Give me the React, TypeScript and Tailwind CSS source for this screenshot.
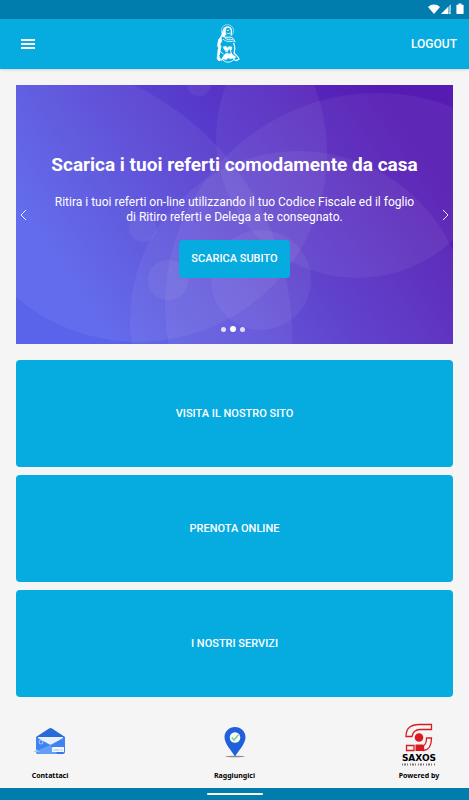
const links = ["VISITA IL NOSTRO SITO", "PRENOTA ONLINE", "I NOSTRI SERVIZI"];

function StatusBar() {
  return (
    <div className="flex h-[19px] items-center justify-end bg-[#007dad] pr-1">
      <svg width="38" height="14" viewBox="0 0 38 14" fill="#fff" aria-hidden="true">
        <path d="M1 4C4.500 .700 9.500 .700 13 4L7 11Z" />
        <path d="M23.500 1.500V11H14Z" fillOpacity=".45" />
        <path d="M21 4V11H14ZM22.300 9.300h1.200v1.700h-1.200zM22.800 2.200l.7-.7v7h-.7z" />
        <path d="M30 1.700h1.500V.5h3v1.200H36q.6 0 .6.600v8q0 .7-.6.700h-6q-.6 0-.6-.7v-8q0-.6.6-.6z" />
      </svg>
    </div>
  );
}

function Logo() {
  return (
    <svg width="24" height="40" viewBox="0 0 24 40" fill="none" stroke="#fff" aria-hidden="true">
      <circle cx="11.500" cy="6.800" r="6.200" strokeWidth=".7" strokeOpacity=".75" />
      <path d="M15 11c1-3 1-8-3.500-8S7 7 6.500 10L4.500 14c-2 2-2.500 5-2 8" strokeWidth="1.400" />
      <path d="M10.500 3.500C7.500 5 8 9 6 12.500l2 .5 2-2.500c-1-2-.5-4.500.5-7z" fill="#fff" strokeWidth=".5" />
      <path d="M11 6.500l2-.5m-2.500 3c1 1 2 1 3.500 0M8 13c2 1 5 1 8 .5 2 1 2.500 3 3 5M7 15c3 3 7 3 11 2M9 14c2 2 5 2 8 1.500" strokeWidth="1" strokeOpacity=".85" />
      <path d="M3 15l2-2 1 4-2 3 1 3-2 2-1.500-3zM2 25l2-2v5l-1 4 2 4-2 1-2-2z" fill="#fff" strokeWidth=".5" />
      <path d="M17.500 19c1.500 3 1.500 7 .5 10l4 4 1 2-2.500 1.500-3-1" strokeWidth="1.200" />
      <path d="M7 23l3-1 1 2 2-1.500 3 .5-.5 3-2-1-2 2-3-1zM9 30l2-1 2 1 2-1 2 2 3 2-2 2-2-1-1 1-3-1-2 2-2-1-3 1 2-3z" fill="#fff" strokeWidth=".4" />
      <path d="M3.500 27l4 3M5 22l-2 9M7 36c3 3 7 3 11-.5M5.500 37l3-6M14 25l2 6M9 27l3 1" strokeWidth=".9" />
    </svg>
  );
}

function Header() {
  return (
    <header className="flex h-[50px] items-center justify-between bg-[#06abdf] px-3 shadow-sm">
      <button type="button" aria-label="Menu" className="flex h-8 w-8 items-center justify-center">
        <svg width="14" height="10" fill="#fff" aria-hidden="true">
          <path d="M0 0h14v2H0zM0 4h14v2H0zM0 8h14v2H0z" />
        </svg>
      </button>
      <Logo />
      <button type="button" className="text-[12px] leading-4 font-medium text-white">
        LOGOUT
      </button>
    </header>
  );
}

function HeroBackground() {
  return (
    <svg
      className="absolute inset-0 h-full w-full"
      viewBox="16 84 437 259"
      preserveAspectRatio="xMidYMid slice"
      aria-hidden="true"
    >
      <defs>
        <linearGradient id="hero" gradientUnits="userSpaceOnUse" x1="80" y1="290" x2="380" y2="90">
          <stop offset="0" stopColor="#515bea" />
          <stop offset=".62" stopColor="#4e29c4" />
          <stop offset="1" stopColor="#4d0eae" />
        </linearGradient>
      </defs>
      <rect x="16" y="84" width="437" height="259" fill="url(#hero)" />
      <g fill="#fff" fillOpacity=".055">
        <circle cx="14" cy="335" r="278" />
        <circle cx="138" cy="152" r="189" />
        <circle cx="299" cy="319" r="169" />
        <circle cx="377" cy="304" r="212" />
        <circle cx="357" cy="136" r="141" />
        <circle cx="261" cy="279" r="50" />
        <circle cx="168" cy="279" r="20" />
        <circle cx="143" cy="227" r="14" />
        <circle cx="199" cy="83" r="12" />
      </g>
    </svg>
  );
}

function Arrow({ path }: { path: string }) {
  return (
    <svg width="7" height="12" viewBox="0 0 7 12" fill="none" stroke="#fff" strokeWidth=".9" aria-hidden="true">
      <path d={path} />
    </svg>
  );
}

function Hero() {
  return (
    <section className="relative h-[259px] overflow-hidden text-center text-white">
      <HeroBackground />
      <div className="relative flex h-full flex-col items-center px-9 pt-[68px]">
        <h1 className="text-[19px] leading-6 font-bold whitespace-nowrap">Scarica i tuoi referti comodamente da casa</h1>
        <p className="mt-[18px] text-[12px] leading-[15px]">
          Ritira i tuoi referti on-line utilizzando il tuo Codice Fiscale ed il foglio di Ritiro referti e Delega a te
          consegnato.
        </p>
        <button type="button" className="mt-[15px] h-[38px] rounded bg-[#06abdf] px-3 text-[11px] font-medium">
          SCARICA SUBITO
        </button>
      </div>
      <button type="button" aria-label="Precedente" className="absolute top-1/2 left-1 -translate-y-1/2">
        <Arrow path="M6 1L1 6l5 5" />
      </button>
      <button type="button" aria-label="Successivo" className="absolute top-1/2 right-1 -translate-y-1/2">
        <Arrow path="M1 1l5 5-5 5" />
      </button>
      <div className="absolute inset-x-0 bottom-3 flex items-center justify-center">
        <button type="button" aria-label="Slide 1" className="mr-1 h-[5px] w-[5px] rounded-full bg-white/80" />
        <button type="button" aria-label="Slide 2" className="mr-1 h-[6px] w-[6px] rounded-full bg-white" />
        <button type="button" aria-label="Slide 3" className="mr-1 h-[5px] w-[5px] rounded-full bg-white/80" />
      </div>
    </section>
  );
}

function EnvelopeIcon() {
  return (
    <svg className="mt-1" width="34" height="30" viewBox="0 0 34 30" aria-hidden="true">
      <path d="M3 10L16 1.500q1.500-1 3 0L32 10v12H3z" fill="#276bd8" />
      <path d="M5 10h25v9H5z" fill="#e8f0fd" />
      <path d="M3 10l14.500 8L32 10v15q0 2-2 2H5q-2 0-2-2z" fill="#3f83f3" />
      <path d="M4 27l13.500-9.500L31 27z" fill="#3277e8" />
      <path d="M1 25l16.500-7 7 9H7l-4-1 2-1z" fill="#639df5" />
      <path d="M0 25l5-3-1 2 4 1z" fill="#a9c8f7" />
      <circle cx="8" cy="15" r="2" fill="none" stroke="#c9dcfb" strokeWidth=".8" />
      <rect x="19" y="20" width="12" height="5" rx=".5" fill="#f1f6ff" />
      <path d="M20.500 23h6m1 0h2" stroke="#8fb8f5" strokeWidth=".8" />
    </svg>
  );
}

function PinIcon() {
  return (
    <svg className="mt-1" width="24" height="32" viewBox="0 0 24 32" aria-hidden="true">
      <ellipse cx="12" cy="29.500" rx="10" ry=".8" fill="#8c8c8c" />
      <path
        d="M12 0C6 0 1.500 4.500 1.500 10.200 1.500 17 9 24 12 29.500 15 24 22.500 17 22.500 10.200 22.500 4.500 18 0 12 0z"
        fill="#2160dc"
      />
      <circle cx="12" cy="10.500" r="5.300" fill="#f7fbf7" />
      <path d="M8.800 10.500l2.300 2.500 4.300-5.300" fill="none" stroke="#80cf8b" strokeWidth="1.500" />
    </svg>
  );
}

function SaxosLogo() {
  return (
    <div className="flex flex-col items-center text-black">
      <svg width="28" height="29" viewBox="0 0 28 29" fill="none" stroke="#d91b20" aria-hidden="true">
        <path d="M1 13.500C1 5 6 1.500 14 1.500h12.500v5H15c-5 0-7 2-8 7z" strokeWidth="1.300" />
        <path d="M26.500 15c0 8-3 12-8 12.500v-5c2.500-1 3-4 3-7.500z" strokeWidth="1.300" />
        <path d="M1.500 22.500h7.500v5H1.500z" strokeWidth="1.300" />
        <circle cx="14" cy="14.500" r="4.300" fill="#d91b20" stroke="none" />
        <path d="M10.500 21.500h7.500v6.500h-7.500z" fill="#d91b20" stroke="none" />
      </svg>
      <span className="mt-0.5 font-['DejaVu_Sans',sans-serif] text-[9px] leading-2 font-bold">SAXOS</span>
      <svg width="34" height="3" viewBox="0 0 34 3" className="mt-px" aria-hidden="true">
        <path d="M0 1.500h34" stroke="#777" strokeWidth="2" strokeDasharray="1 1 2 1 1 2" />
      </svg>
    </div>
  );
}

const contacts = [
  { label: "Contattaci", icon: <EnvelopeIcon /> },
  { label: "Raggiungici", icon: <PinIcon /> },
  { label: "Powered by", icon: <SaxosLogo /> },
];

export default function App() {
  return (
    <div className="flex min-h-screen flex-col bg-[#f5f5f5] font-['Roboto',sans-serif]">
      <StatusBar />
      <Header />
      <main className="flex flex-col gap-4 px-4 pt-4">
        <Hero />
        <nav className="flex flex-col gap-2">
          {links.map((label) => (
            <a
              key={label}
              href="#"
              className="flex h-[107px] items-center justify-center rounded bg-[#06abdf] pt-0.5 text-[11px] font-medium text-white"
            >
              {label}
            </a>
          ))}
        </nav>
      </main>
      <footer className="mt-auto">
        <div className="flex justify-between px-4 pb-[7px]">
          {contacts.map(({ label, icon }) => (
            <a key={label} href="#" className="flex w-[68px] flex-col items-center">
              <span className="flex h-12 items-start justify-center">{icon}</span>
              <span className="font-['Noto_Sans',sans-serif] text-[7px] leading-[10px] font-bold whitespace-nowrap text-black">
                {label}
              </span>
            </a>
          ))}
        </div>
        <div className="flex h-3 items-center justify-center bg-[#007dad]">
          <div className="h-[2px] w-14 rounded-full bg-white" />
        </div>
      </footer>
    </div>
  );
}
